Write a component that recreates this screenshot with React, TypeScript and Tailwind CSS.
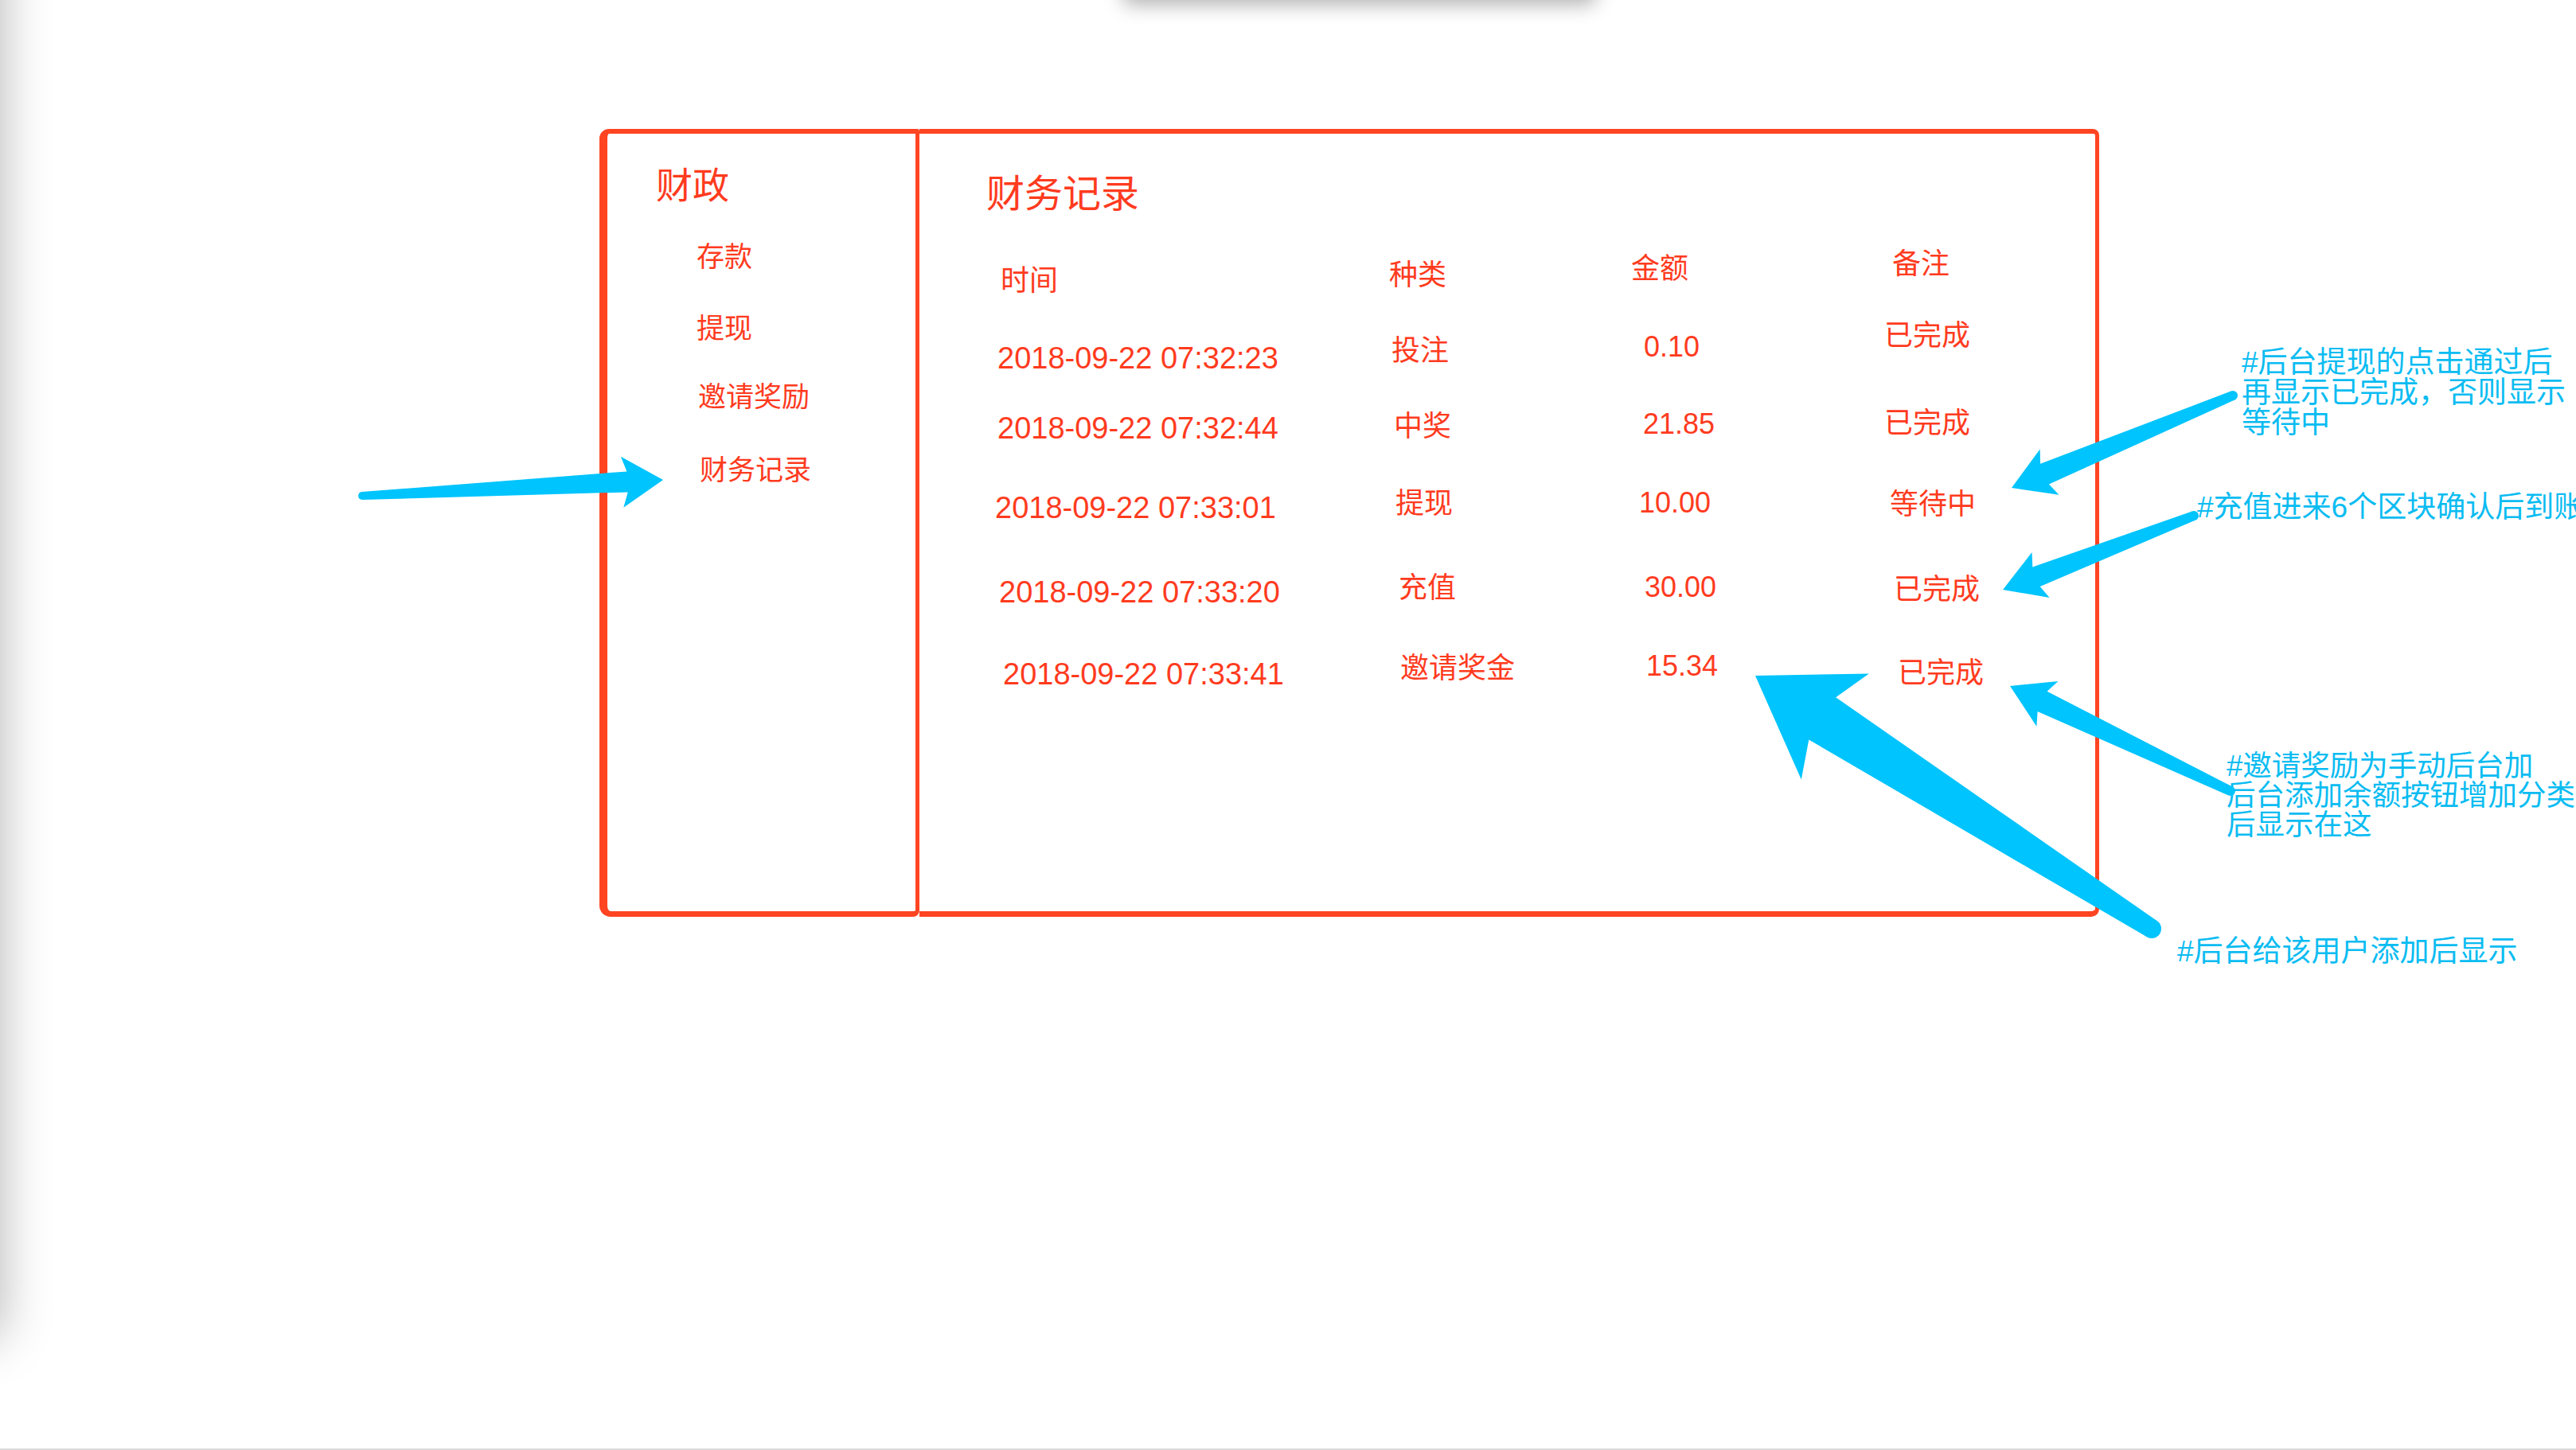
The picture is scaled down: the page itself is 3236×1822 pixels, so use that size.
import React from "react";

type Arrow = {
  p: [number, number];
  t: [number, number];
  join: number;
  barb: number;
  head: number;
  shaft: number;
  tail: number;
};

const arrows: Arrow[] = [
  { p: [833, 603], t: [455, 623], join: 45, barb: 51.5, head: 32, shaft: 13, tail: 5 },
  { p: [2527, 613], t: [2805, 497], join: 45, barb: 51.5, head: 31, shaft: 14, tail: 6 },
  { p: [2516, 741], t: [2756, 648], join: 45, barb: 51, head: 30.5, shaft: 13, tail: 6 },
  { p: [2525, 862], t: [2802, 994], join: 45, barb: 52, head: 31.5, shaft: 14, tail: 6 },
  { p: [2205, 849], t: [2703, 1167], join: 100, barb: 119, head: 79, shaft: 31.5, tail: 12 },
];

function arrowPoints(a: Arrow) {
  const dx = a.t[0] - a.p[0];
  const dy = a.t[1] - a.p[1];
  const len = Math.hypot(dx, dy);
  const ux = dx / len;
  const uy = dy / len;
  const nx = -uy;
  const ny = ux;
  const pt = (along: number, side: number, base: [number, number] = a.p) =>
    `${(base[0] + ux * along + nx * side).toFixed(1)},${(base[1] + uy * along + ny * side).toFixed(1)}`;
  return [
    pt(0, 0),
    pt(a.barb, a.head),
    pt(a.join, a.shaft),
    pt(0, a.tail, a.t),
    pt(0, -a.tail, a.t),
    pt(a.join, -a.shaft),
    pt(a.barb, -a.head),
  ].join(" ");
}

type Cell = { text: string; cls: string };
type Row = { h: string; cells: Cell[] };

const rows: Row[] = [
  {
    h: "h-[100px]",
    cells: [
      { text: "时间", cls: "pl-[7px] pt-[35px] text-[36px]" },
      { text: "种类", cls: "pl-[0px] pt-[28px] text-[36px]" },
      { text: "金额", cls: "pl-[0px] pt-[20px] text-[36px]" },
      { text: "备注", cls: "pl-[10px] pt-[14px] text-[36px]" },
    ],
  },
  {
    h: "h-[90px]",
    cells: [
      { text: "2018-09-22 07:32:23", cls: "pl-[3px] pt-[31px] text-[38px]" },
      { text: "投注", cls: "pl-[3px] pt-[23px] text-[36px]" },
      { text: "0.10", cls: "pl-[16px] pt-[18px] text-[36px]" },
      { text: "已完成", cls: "pl-[0px] pt-[4px] text-[36px]" },
    ],
  },
  {
    h: "h-[100px]",
    cells: [
      { text: "2018-09-22 07:32:44", cls: "pl-[3px] pt-[29px] text-[38px]" },
      { text: "中奖", cls: "pl-[6px] pt-[28px] text-[36px]" },
      { text: "21.85", cls: "pl-[15px] pt-[25px] text-[36px]" },
      { text: "已完成", cls: "pl-[0px] pt-[24px] text-[36px]" },
    ],
  },
  {
    h: "h-[100px]",
    cells: [
      { text: "2018-09-22 07:33:01", cls: "pl-[0px] pt-[29px] text-[38px]" },
      { text: "提现", cls: "pl-[8px] pt-[25px] text-[36px]" },
      { text: "10.00", cls: "pl-[10px] pt-[24px] text-[36px]" },
      { text: "等待中", cls: "pl-[7px] pt-[26px] text-[36px]" },
    ],
  },
  {
    h: "h-[100px]",
    cells: [
      { text: "2018-09-22 07:33:20", cls: "pl-[5px] pt-[35px] text-[38px]" },
      { text: "充值", cls: "pl-[12px] pt-[31px] text-[36px]" },
      { text: "30.00", cls: "pl-[17px] pt-[30px] text-[36px]" },
      { text: "已完成", cls: "pl-[12px] pt-[33px] text-[36px]" },
    ],
  },
  {
    h: "h-[100px]",
    cells: [
      { text: "2018-09-22 07:33:41", cls: "pl-[10px] pt-[38px] text-[38px]" },
      { text: "邀请奖金", cls: "pl-[14px] pt-[32px] text-[36px]" },
      { text: "15.34", cls: "pl-[19px] pt-[29px] text-[36px]" },
      { text: "已完成", cls: "pl-[17px] pt-[38px] text-[36px]" },
    ],
  },
];

const navItems = [
  { text: "存款", cls: "mt-[49px] pl-[0px]" },
  { text: "提现", cls: "mt-[55px] pl-[0px]" },
  { text: "邀请奖励", cls: "mt-[51px] pl-[2px]" },
  { text: "财务记录", cls: "mt-[57px] pl-[4px]" },
];

export default function App() {
  return (
    <div className="relative w-[3236px] h-[1822px] overflow-hidden bg-white border-b-2 border-[#dcdcdc] font-['Liberation_Sans','Noto_Sans_CJK_SC',sans-serif] text-[#ff3b1e]">
      {/* neighbouring windows casting shadows into the canvas */}
      <div className="absolute left-[-300px] top-[-200px] w-[300px] h-[1880px] bg-white shadow-[0_0_60px_rgba(0,0,0,0.3)]" />
      <div className="absolute left-[1410px] top-[-100px] w-[595px] h-[100px] rounded-b-[10px] bg-white shadow-[0_6px_24px_rgba(0,0,0,0.3)]" />

      <div className="flex pl-[753px] pt-[162px]">
        <aside className="flex flex-col w-[402px] h-[990px] border-[#ff4422] border-l-[10px] border-t-[6px] border-b-[7px] border-r-[5px] rounded-tl-[12px] rounded-bl-[14px] rounded-br-[8px] rounded-tr-[3px]">
          <h2 className="pl-[61px] mt-[42px] text-[46px] leading-none font-normal">财政</h2>
          <nav className="flex flex-col pl-[112px] text-[35px] leading-none">
            {navItems.map((n) => (
              <div key={n.text} className={n.cls}>
                {n.text}
              </div>
            ))}
          </nav>
        </aside>

        <main className="w-[1482px] h-[990px] border-[#ff4422] border-t-[6px] border-b-[7px] border-r-[5px] rounded-tr-[8px] rounded-br-[10px]">
          <h1 className="pl-[84px] mt-[52px] text-[48px] leading-none font-normal">财务记录</h1>
          <div className="ml-[95px] mt-[32px] flex flex-col">
            {rows.map((r, i) => (
              <div key={i} className={`grid grid-cols-[495px_304px_318px_1fr] ${r.h}`}>
                {r.cells.map((c, j) => (
                  <div key={j} className={`${c.cls} leading-none whitespace-nowrap`}>
                    {c.text}
                  </div>
                ))}
              </div>
            ))}
          </div>
        </main>
      </div>

      {/* annotations */}
      <div className="absolute left-[2816px] top-[437px] text-[37px] leading-[38px] text-[#0abcf2] whitespace-nowrap">
        <div>#后台提现的点击通过后</div>
        <div>再显示已完成，否则显示</div>
        <div>等待中</div>
      </div>
      <div className="absolute left-[2760px] top-[619px] text-[37px] leading-[38px] text-[#0abcf2] whitespace-nowrap">
        #充值进来6个区块确认后到账
      </div>
      <div className="absolute left-[2797px] top-[944px] text-[36.5px] leading-[37px] text-[#0abcf2] whitespace-nowrap">
        <div>#邀请奖励为手动后台加</div>
        <div>后台添加余额按钮增加分类</div>
        <div>后显示在这</div>
      </div>
      <div className="absolute left-[2735px] top-[1177px] text-[37px] leading-[38px] text-[#0abcf2] whitespace-nowrap">
        #后台给该用户添加后显示
      </div>

      <svg className="absolute inset-0 pointer-events-none" width={3236} height={1822} viewBox="0 0 3236 1822">
        {arrows.map((a, i) => (
          <g key={i} fill="#00c4fd">
            <polygon points={arrowPoints(a)} />
            <circle cx={a.t[0]} cy={a.t[1]} r={a.tail} />
          </g>
        ))}
      </svg>
    </div>
  );
}
